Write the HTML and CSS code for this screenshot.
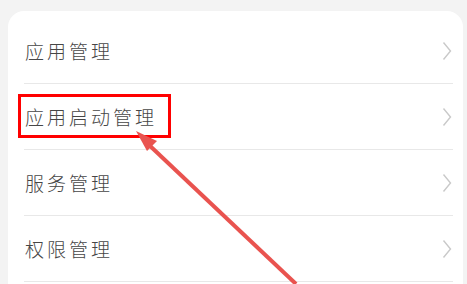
FILE: index.html
```html
<!DOCTYPE html>
<html lang="zh-CN">
<head>
<meta charset="utf-8">
<link rel="stylesheet" href="styles.css">
</head>
<body>
<div class="card">
  <div class="row"><div class="inner"><span class="label">应用管理</span><svg class="chev" viewBox="0 0 10 20" width="10" height="20"><path d="M1.5 1.5 L8.5 10 L1.5 18.5" fill="none" stroke="#c9c9c9" stroke-width="1.4"/></svg></div></div>
  <div class="row"><div class="inner"><span class="label">应用启动管理</span><svg class="chev" viewBox="0 0 10 20" width="10" height="20"><path d="M1.5 1.5 L8.5 10 L1.5 18.5" fill="none" stroke="#c9c9c9" stroke-width="1.4"/></svg></div></div>
  <div class="row"><div class="inner"><span class="label">服务管理</span><svg class="chev" viewBox="0 0 10 20" width="10" height="20"><path d="M1.5 1.5 L8.5 10 L1.5 18.5" fill="none" stroke="#c9c9c9" stroke-width="1.4"/></svg></div></div>
  <div class="row"><div class="inner"><span class="label">权限管理</span><svg class="chev" viewBox="0 0 10 20" width="10" height="20"><path d="M1.5 1.5 L8.5 10 L1.5 18.5" fill="none" stroke="#c9c9c9" stroke-width="1.4"/></svg></div></div>
</div>
<svg class="annot" viewBox="0 0 467 284" width="467" height="284">
  <rect x="19.5" y="95.5" width="150" height="41" fill="none" stroke="#ff0000" stroke-width="3"/>
  <line x1="148" y1="144" x2="296" y2="284" stroke="#e9534f" stroke-width="4"/>
  <polygon points="136,131 157,141 152,146 147,151" fill="#e9534f"/>
</svg>
</body>
</html>
```
FILE: styles.css
```css
html, body {
  margin: 0;
  padding: 0;
}
body {
  width: 467px;
  height: 284px;
  overflow: hidden;
  background: #f3f3f3;
  position: relative;
  font-family: "Noto Sans CJK SC", "Noto Sans", sans-serif;
}
.card {
  margin: 11px 0 0 8px;
  width: 455px;
  padding: 7px 0 2px;
  background: #ffffff;
  border-radius: 16px 16px 0 0;
}
.row {
  padding: 0 10px 0 16px;
}
.inner {
  height: 65px;
  border-bottom: 1px solid #e8e8e8;
  display: flex;
  align-items: center;
  justify-content: space-between;
  padding-left: 1px;
}
.label {
  font-size: 19px;
  letter-spacing: 3px;
  color: #464646;
  font-weight: 300;
}
.chev {
  margin-right: 1px;
  display: block;
}
.annot {
  position: absolute;
  left: 0;
  top: 0;
}
```
